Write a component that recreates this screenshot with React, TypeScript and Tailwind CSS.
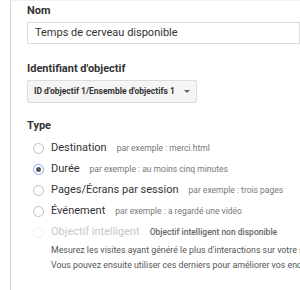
import React from "react";

const types = [
  { label: "Destination", hint: "par exemple : merci.html", checked: false },
  { label: "Durée", hint: "par exemple : au moins cinq minutes", checked: true },
  { label: "Pages/Écrans par session", hint: "par exemple : trois pages", checked: false },
  { label: "Événement", hint: "par exemple : a regardé une vidéo", checked: false },
];

function Radio({ checked, disabled }: { checked?: boolean; disabled?: boolean }) {
  if (checked) {
    return (
      <span className="w-[11px] h-[11px] rounded-full border-[1.5px] border-[#7aa7f5] flex items-center justify-center shrink-0">
        <span className="w-[5px] h-[5px] rounded-full bg-[#555]"></span>
      </span>
    );
  }
  return (
    <span
      className={`w-[11px] h-[11px] rounded-full border shrink-0 ${
        disabled ? "border-[#eeeeee]" : "border-[#bdbdbd]"
      }`}
    ></span>
  );
}

export default function App() {
  return (
    <div className="w-[300px] h-[290px] bg-white overflow-hidden font-['Roboto',sans-serif]">
      <div className="ml-[10px] h-full border-l border-t border-l-[#d6d6d6] border-t-[#f0f0f0] pl-[16px] pt-[3px]">
        <div className="text-[11px] leading-[14px] font-bold text-[#333]">Nom</div>
        <div className="mt-[4px] h-[22px] border border-[#dcdcdc] pl-[7px] flex items-center text-[11px] text-[#333] whitespace-nowrap">
          Temps de cerveau disponible
        </div>

        <div className="mt-[18px] text-[11px] leading-[14px] font-bold text-[#333]">
          Identifiant d'objectif
        </div>
        <div className="mt-[4px] w-[170px] h-[23px] bg-[#f5f5f5] border border-[#dcdcdc] rounded-[2px] pl-[6px] pr-[6px] flex items-center justify-between">
          <span className="text-[8.5px] font-bold text-[#333] whitespace-nowrap">
            ID d'objectif 1/Ensemble d'objectifs 1
          </span>
          <span className="w-0 h-0 border-l-[3px] border-r-[3px] border-t-[3px] border-l-transparent border-r-transparent border-t-[#666]"></span>
        </div>

        <div className="mt-[16px] text-[11px] leading-[14px] font-bold text-[#333]">Type</div>
        <div className="mt-[5px] pl-[6px]">
          {types.map((t) => (
            <div key={t.label} className="h-[21px] flex items-center gap-[7px] whitespace-nowrap">
              <Radio checked={t.checked} />
              <span className="text-[11px] text-[#333]">{t.label}</span>
              <span className="ml-[3px] text-[8.5px] text-[#777]">{t.hint}</span>
            </div>
          ))}
          <div className="h-[21px] flex items-center gap-[7px] whitespace-nowrap">
            <Radio disabled />
            <span className="text-[11px] text-[#c8c8c8]">Objectif intelligent</span>
            <span className="ml-[3px] text-[8.5px] font-medium text-[#666]">
              Objectif intelligent non disponible
            </span>
          </div>
          <div className="pl-[18px] text-[8.8px] leading-[15px] text-[#555] whitespace-nowrap">
            <div>Mesurez les visites ayant généré le plus d'interactions sur votre site</div>
            <div>Vous pouvez ensuite utiliser ces derniers pour améliorer vos enchères</div>
          </div>
        </div>
      </div>
    </div>
  );
}
